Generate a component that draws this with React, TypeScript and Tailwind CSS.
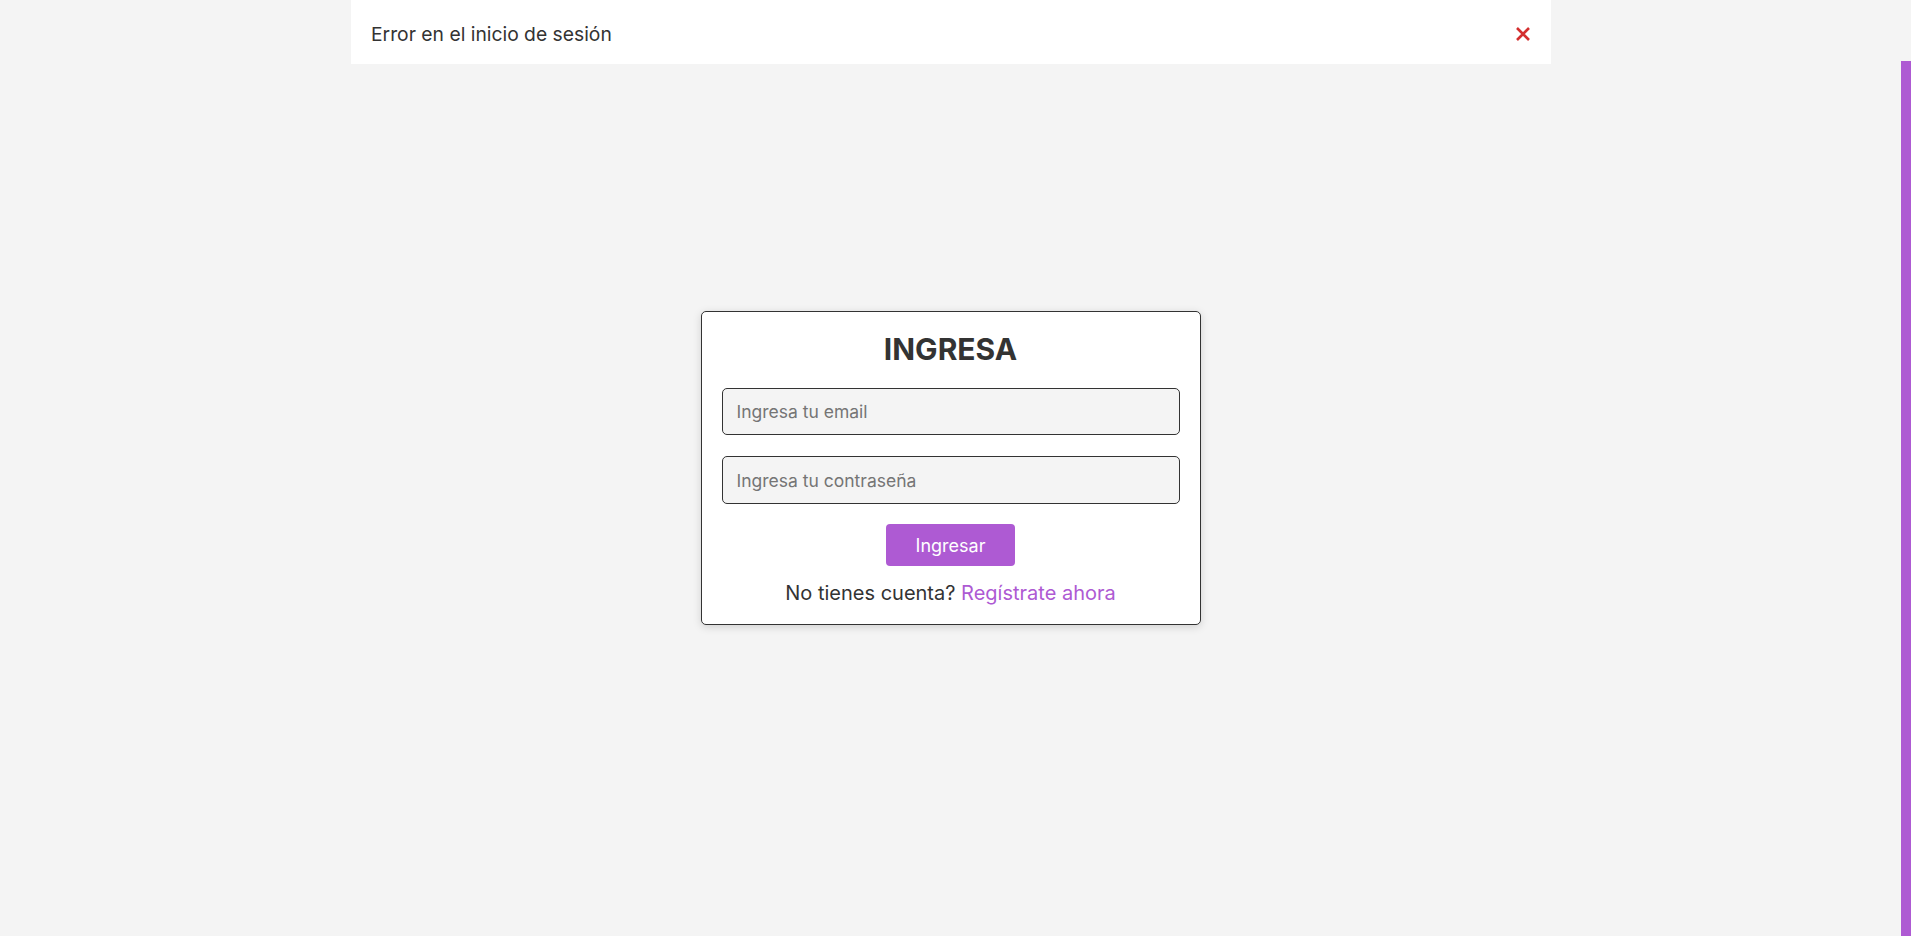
export default function App() {
  return (
    <div className="flex h-screen w-full bg-[#f4f4f4] font-['Inter','Liberation_Sans',sans-serif] text-[#333]">
      <main className="relative flex flex-1 items-center justify-center">
        <div className="fixed left-[351px] top-0 flex h-[64px] w-[1200px] items-center justify-between bg-white pl-[20px] pr-[16px] pt-[4px]">
          <span className="text-[19.3px] text-[#333]">Error en el inicio de sesión</span>
          <button className="flex h-[24px] w-[24px] items-center justify-center text-[#d32f2f]">
            <svg width="16" height="16" viewBox="0 0 16 16">
              <path d="M2 2 L14 14 M14 2 L2 14" stroke="currentColor" strokeWidth="2.6" strokeLinecap="butt" />
            </svg>
          </button>
        </div>

        <div className="flex w-[500px] flex-col items-center rounded-[5px] border border-[#333] bg-white px-[20px] pt-[18px] pb-[18px] shadow-[0_2px_8px_rgba(0,0,0,0.15)]">
          <h1 className="text-[30px] font-bold leading-[38px]">INGRESA</h1>
          <input
            placeholder="Ingresa tu email"
            className="mt-[20px] h-[47px] w-full rounded-[5px] border border-[#333] bg-[#f4f4f4] px-[14px] text-[17.5px] placeholder:text-[#757575] outline-none"
          />
          <input
            type="password"
            placeholder="Ingresa tu contraseña"
            className="mt-[21px] h-[48px] w-full rounded-[5px] border border-[#333] bg-[#f4f4f4] px-[14px] text-[17.5px] placeholder:text-[#757575] outline-none"
          />
          <button className="mt-[20px] h-[42px] w-[129px] rounded-[4px] bg-[#ae5ad3] text-[18px] text-white">
            Ingresar
          </button>
          <p className="mt-[14px] text-[20px] leading-[26px]">
            No tienes cuenta? <a className="text-[#ae5ad3]">Regístrate ahora</a>
          </p>
        </div>
      </main>
      <aside className="w-[10px] pt-[61px]">
        <div className="h-full bg-[#ae5ad3]" />
      </aside>
    </div>
  );
}
